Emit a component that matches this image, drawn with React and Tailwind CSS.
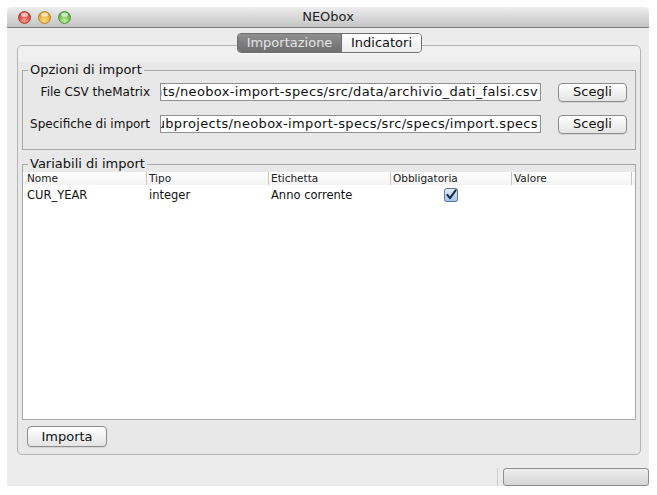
import React from "react";

const TrafficLight = ({ id, light, dark, edge }) => (
    <svg width="13" height="13" viewBox="0 0 13 13">
        <defs>
            <radialGradient id={id} cx="50%" cy="75%" r="65%">
                <stop offset="0%" stopColor={light} />
                <stop offset="100%" stopColor={dark} />
            </radialGradient>
        </defs>
        <circle cx="6.5" cy="6.5" r="6" fill={`url(#${id})`} stroke={edge} strokeWidth="0.8" />
        <ellipse cx="6.5" cy="3.7" rx="3.5" ry="2.1" fill="#ffffff" opacity="0.65" />
    </svg>
);

const CheckBox = () => (
    <svg width="14" height="14" viewBox="0 0 14 14">
        <defs>
            <linearGradient id="cb" x1="0" y1="0" x2="0" y2="1">
                <stop offset="0" stopColor="#e3eefb" />
                <stop offset="1" stopColor="#a4c2e6" />
            </linearGradient>
        </defs>
        <rect x="0.5" y="0.5" width="13" height="13" rx="2" fill="url(#cb)" stroke="#5b7497" />
        <path d="M3.3 6.9 L6 10.2 L11.8 2.2" fill="none" stroke="#1b2a46" strokeWidth="2" strokeLinecap="round" strokeLinejoin="round" />
    </svg>
);

const AquaButton = ({ label, className }) => (
    <button className={`flex items-center justify-center rounded-[4px] border border-[#8c8c8c] bg-[linear-gradient(to_bottom,#ffffff,#e4e4e4)] text-[13px] text-[#111] shadow-[0_1px_0_rgba(0,0,0,0.08)] ${className}`}>
        {label}
    </button>
);

const FileRow = ({ label, path }) => (
    <div className="flex h-[18px] items-center">
        <div className="flex w-[128px] justify-end whitespace-nowrap pr-[1px] text-[12px] leading-[16px] text-[#111]">{label}</div>
        {/* path field, scrolled to the end */}
        <div className="ml-[9px] flex h-[18px] w-[381px] items-center justify-end overflow-hidden border border-[#8f8f8f] bg-white pr-[2px]">
            <span className="shrink-0 whitespace-nowrap text-[13px] leading-[16px] tracking-[0.35px] text-[#111]">{path}</span>
        </div>
        <AquaButton label="Scegli" className="ml-[17px] h-[19px] w-[69px]" />
    </div>
);

const columns = [
    { name: "Nome", w: "w-[123px] pl-[4px]" },
    { name: "Tipo", w: "w-[122px] pl-[2px] border-l border-[#c6c6c6]" },
    { name: "Etichetta", w: "w-[122px] pl-[2px] border-l border-[#c6c6c6]" },
    { name: "Obbligatoria", w: "w-[121px] pl-[2px] border-l border-[#c6c6c6]" },
    { name: "Valore", w: "w-[121px] pl-[2px] border-x border-[#c6c6c6]" },
];

const App = () => {
    return (
        <div className="h-[495px] w-[657px] bg-white pl-[7px] pt-[7px] font-['DejaVu_Sans',sans-serif]">
            <div className="flex h-[479px] w-[642px] flex-col rounded-t-[5px] bg-[#ececec]">
                {/* Title bar */}
                <div className="grid h-[21px] grid-cols-[1fr_auto_1fr] items-center rounded-t-[5px] border-b border-[#7b7b7b] bg-[linear-gradient(to_bottom,#ededed,#c4c4c4)]">
                    <div className="flex gap-[7px] pl-[11px]">
                        <TrafficLight id="tl-red" light="#ff9a8e" dark="#d0352c" edge="#9c3129" />
                        <TrafficLight id="tl-yellow" light="#ffe08a" dark="#e09a1a" edge="#a7781f" />
                        <TrafficLight id="tl-green" light="#c3f09a" dark="#53aa35" edge="#3e862b" />
                    </div>
                    <div className="text-[13px] text-[#1e1e1e]">NEObox</div>
                    <div />
                </div>

                {/* Tabs */}
                <div className="relative z-10 mt-[5px] flex justify-center pl-[3px]">
                    <div className="flex h-[20px] overflow-hidden rounded-[4px] border border-[#6f6f6f] shadow-[0_1px_0_rgba(255,255,255,0.6)]">
                        <div className="flex w-[103px] items-center justify-center bg-[linear-gradient(to_bottom,#8f8f8f,#6e6e6e)] text-[13px] text-[#e4e4e4]">
                            Importazione
                        </div>
                        <div className="flex w-[80px] items-center justify-center border-l border-[#6f6f6f] bg-[linear-gradient(to_bottom,#ffffff,#ececec)] text-[13px] text-[#111]">
                            Indicatori
                        </div>
                    </div>
                </div>

                {/* Tab pane */}
                <div className="ml-[10px] mt-[-8px] flex h-[410px] w-[624px] flex-col rounded-[5px] border border-[#b4b4b4] bg-[linear-gradient(to_bottom,#f0f0f0_0px,#f0f0f0_16px,#e8e8e8_16px)] px-[4px] pt-[16px]">
                    <fieldset className="border border-[#a8a8a8] pb-[16px] pt-[5px]">
                        <legend className="ml-[5px] px-[2px] text-[13px] leading-[16px] text-[#111]">Opzioni di import</legend>
                        <div className="flex flex-col gap-[14px]">
                            <FileRow label="File CSV theMatrix" path="/Users/user/Documents/neobox-import-specs/src/data/archivio_dati_falsi.csv" />
                            <FileRow label="Specifiche di import" path="/Users/user/subprojects/neobox-import-specs/src/specs/import.specs" />
                        </div>
                    </fieldset>

                    <fieldset className="mt-[6px] border border-[#a8a8a8]">
                        <legend className="ml-[5px] px-[2px] text-[13px] leading-[16px] text-[#111]">Variabili di import</legend>
                        <div className="h-[247px] bg-white">
                            <div className="flex h-[13px] bg-[linear-gradient(to_bottom,#ffffff,#f3f3f3)]">
                                {columns.map((c) => (
                                    <div key={c.name} className={`${c.w} text-[10.5px] leading-[13px] text-[#222]`}>
                                        {c.name}
                                    </div>
                                ))}
                            </div>
                            <div className="flex h-[20px] items-center text-[11.5px] leading-[15px] text-[#111]">
                                <div className="w-[123px] pl-[4px]">CUR_YEAR</div>
                                <div className="w-[122px] pl-[3px]">integer</div>
                                <div className="w-[122px] pl-[3px]">Anno corrente</div>
                                <div className="flex w-[121px] justify-center">
                                    <CheckBox />
                                </div>
                                <div className="w-[121px]" />
                            </div>
                        </div>
                    </fieldset>

                    <AquaButton label="Importa" className="ml-[5px] mt-[6px] h-[21px] w-[80px]" />
                </div>

                {/* Status bar */}
                <div className="flex h-[31px] items-end justify-end">
                    <div className="mr-[5px] h-[18px] w-px bg-[#cdcdcd]" />
                    <div className="h-[18px] w-[146px] rounded-[3px] border border-[#8e8e8e] bg-[linear-gradient(to_bottom,#eeeeee,#d6d6d6)]" />
                </div>
            </div>
        </div>
    );
};

export default App;
